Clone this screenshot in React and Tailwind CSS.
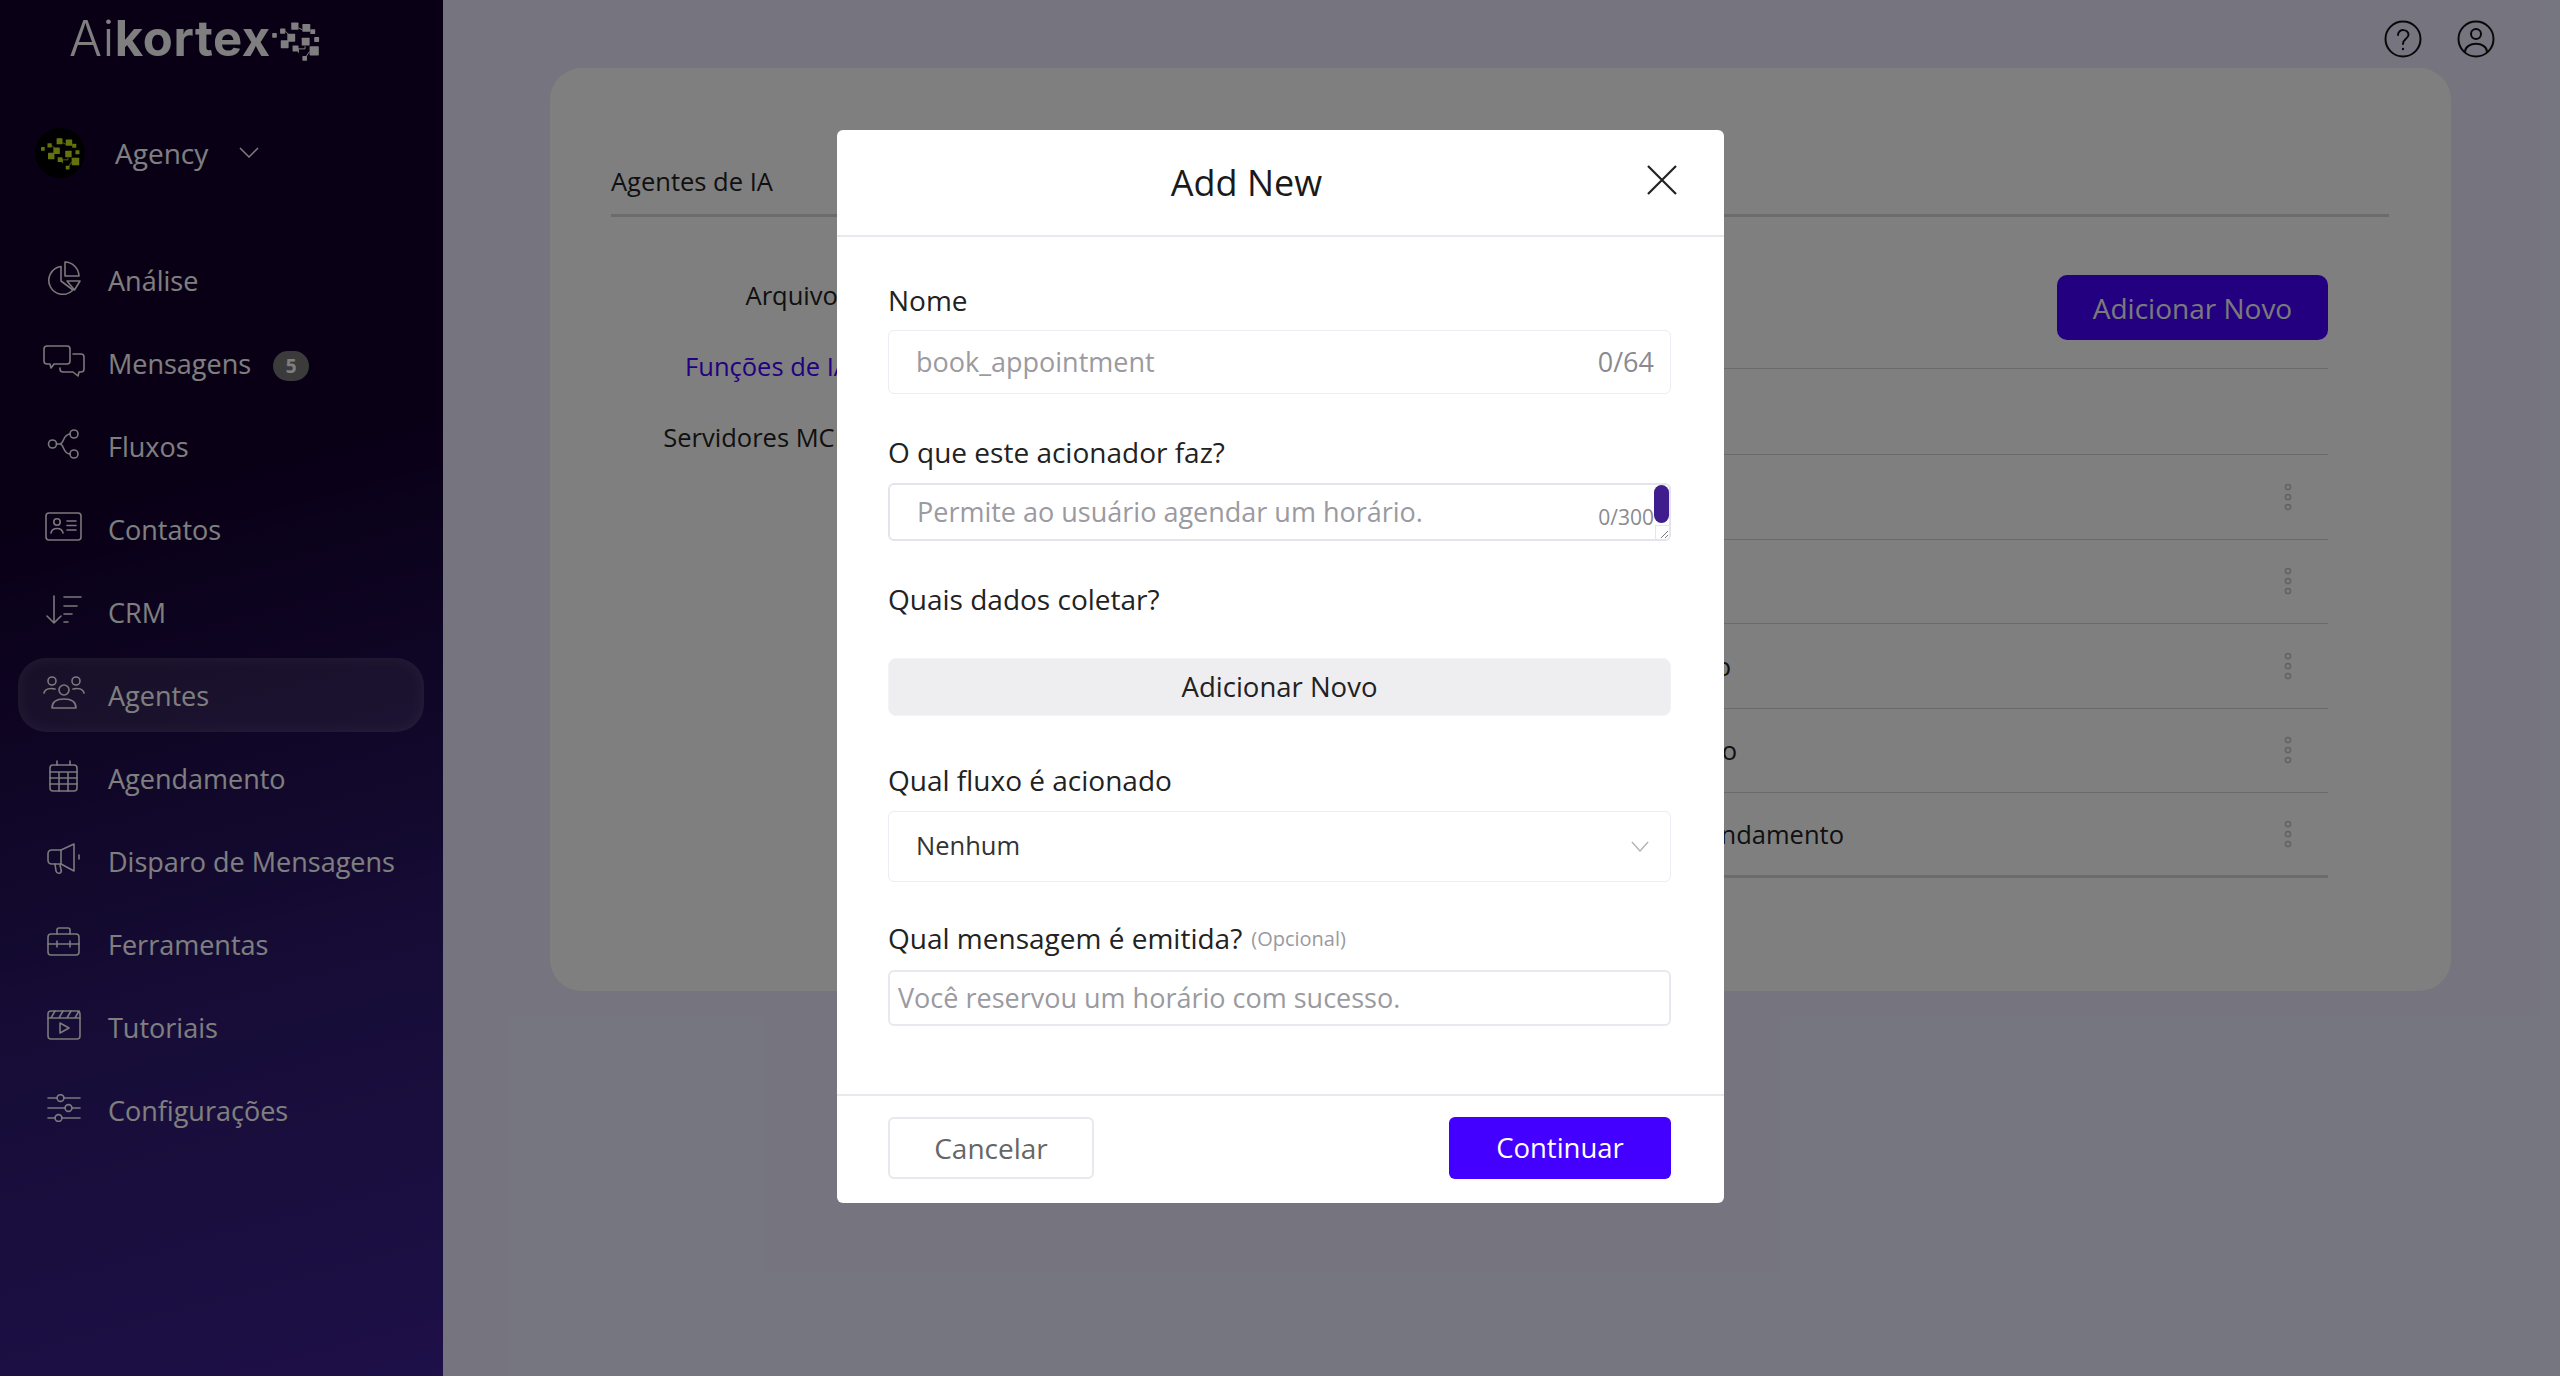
import React from "react";

const font = { fontFamily: '"Open Sans", sans-serif' };

function Brain({ className, fill }) {
  const squares = [
    [0, 40, 14, 14], [24, 26, 16, 16], [58, 8, 22, 22], [92, 12, 24, 24], [116, 28, 15, 15],
    [128, 52, 15, 15], [114, 80, 28, 28], [90, 54, 24, 24], [46, 42, 24, 24], [26, 62, 24, 24],
    [62, 78, 18, 18], [92, 110, 14, 14],
  ];
  return (
    <svg viewBox="0 0 145 125" className={className} fill={fill} stroke={fill} strokeWidth="3">
      {squares.map(([x, y, w, h], i) => (
        <rect key={i} x={x} y={y} width={w} height={h} rx="2" stroke="none" />
      ))}
      <path d="M70 88H100V80M114 96L100 116M80 88V100M40 34L50 44M92 30L80 24" fill="none" />
    </svg>
  );
}

const S = ({ w, h, children }) => (
  <svg viewBox={`0 0 ${w} ${h}`} width={w} height={h} fill="none" stroke="currentColor" strokeWidth="1.6" strokeLinecap="round" strokeLinejoin="round">
    {children}
  </svg>
);

const icons = {
  analise: (
    <S w={36} h={34}>
      <path d="M15 5.5A14 14 0 1 0 27 29L15 20Z" />
      <path d="M19 1A14.5 14.5 0 0 1 33 15H19Z" />
      <path d="M21 20H34L28.5 29Z" />
    </S>
  ),
  msg: (
    <S w={42} h={33}>
      <path d="M4 1H24Q27 1 27 4V16Q27 19 24 19H11L8 23L7 19H4Q1 19 1 16V4Q1 1 4 1Z" />
      <path d="M30 9H38Q41 9 41 12V24Q41 27 38 27H36L35 31L30 27H20Q17 27 17 24V23" />
    </S>
  ),
  fluxos: (
    <S w={34} h={30}>
      <circle cx="5.5" cy="15" r="4" />
      <circle cx="27" cy="5" r="4" />
      <circle cx="27" cy="25" r="4" />
      <path d="M9.5 15H13C17 15 16 5 23 5M13 15C17 15 16 25 23 25" />
    </S>
  ),
  contatos: (
    <S w={38} h={30}>
      <rect x="1" y="1" width="35" height="27" rx="3" />
      <circle cx="12" cy="10" r="3.2" />
      <path d="M6 21C7 15 17 15 18 21" />
      <path d="M22 9H31M22 13.5H31M22 18H31" />
    </S>
  ),
  crm: (
    <S w={37} h={30}>
      <path d="M8 1V28M1 21L8 28L15 21" />
      <path d="M18 2H35M18 11H31M18 19H26M18 27H22" />
    </S>
  ),
  agentes: (
    <S w={42} h={34}>
      <circle cx="9" cy="5" r="4" />
      <circle cx="33" cy="5" r="4" />
      <circle cx="21" cy="14" r="5" />
      <path d="M1 17C2 13 7 12 12 13M41 17C40 13 35 12 30 13" />
      <path d="M9 32C9 25 14 23 21 23C28 23 33 25 33 32Z" />
    </S>
  ),
  agenda: (
    <S w={30} h={33}>
      <rect x="1" y="5" width="27" height="26" rx="3" />
      <path d="M8 1V5M21 1V5M1 12H28M1 18H28M1 24H28M10 12V31M19 12V31" />
    </S>
  ),
  disparo: (
    <S w={34} h={33}>
      <path d="M27 1V28L14 21H5Q1 21 1 17V11Q1 7 5 7H14Z" />
      <path d="M14 7V21M8 21L9 28Q10 31 13 30Q15 29 14 26L13 22" />
      <path d="M32 12V16" />
    </S>
  ),
  ferramentas: (
    <S w={34} h={30}>
      <rect x="1" y="7" width="31" height="21" rx="3" />
      <path d="M10 7V3Q10 1 12 1H21Q23 1 23 3V7M1 17H32M10 14V20M23 14V20" />
    </S>
  ),
  tutoriais: (
    <S w={34} h={30}>
      <rect x="1" y="1" width="32" height="28" rx="3" />
      <path d="M1 8H33M4 8L8 1M12 8L16 1M20 8L24 1M28 8L32 1" />
      <path d="M13 13L22 18L13 23Z" />
    </S>
  ),
  config: (
    <S w={34} h={28}>
      <path d="M1 4H10M17 4H33M1 14H18M25 14H33M1 24H8M15 24H33" />
      <circle cx="13.5" cy="4" r="3.4" />
      <circle cx="21.5" cy="14" r="3.4" />
      <circle cx="11.5" cy="24" r="3.4" />
    </S>
  ),
};

const nav = [
  ["analise", "Análise"],
  ["msg", "Mensagens", "5"],
  ["fluxos", "Fluxos"],
  ["contatos", "Contatos"],
  ["crm", "CRM"],
  ["agentes", "Agentes", null, true],
  ["agenda", "Agendamento"],
  ["disparo", "Disparo de Mensagens"],
  ["ferramentas", "Ferramentas"],
  ["tutoriais", "Tutoriais"],
  ["config", "Configurações"],
];

function Sidebar() {
  return (
    <aside className="w-[443px] shrink-0 h-full text-white bg-[linear-gradient(165deg,#12002c_35%,#2e1a70_72%,#3c2090_100%)]">
      <div className="flex items-center pl-[69px] pt-[2px] h-[74px]">
        <span className="text-[49px] leading-none tracking-[0.6px] text-white" style={{ fontFamily: '"Inter", sans-serif' }}>
          <span className="font-light">Ai</span>
          <span className="font-bold">kortex</span>
        </span>
        <Brain className="w-[48px] h-[41px] ml-[1px] mt-[5px]" fill="#ffffff" />
      </div>
      <div className="flex items-center pl-[35px] mt-[54px] h-[50px]">
        <div className="w-[50px] h-[50px] rounded-full bg-black flex items-center justify-center">
          <Brain className="w-[39px] h-[34px]" fill="#c8e61c" />
        </div>
        <span className="ml-[30px] text-[28px] text-white">Agency</span>
        <svg viewBox="0 0 20 12" className="w-[20px] h-[12px] ml-[31px]" fill="none" stroke="#ffffff" strokeWidth="1.5">
          <path d="M1 1L10 10L19 1" />
        </svg>
      </div>
      <nav className="mt-[65px] flex flex-col gap-[9px] pl-[18px] pr-[19px]">
        {nav.map(([k, label, badge, active]) => (
          <div
            key={k}
            className={
              "flex items-center h-[74px] rounded-[28px] " +
              (active ? "bg-white/10 shadow-[inset_0_0_14px_rgba(255,255,255,0.12)]" : "")
            }
          >
            <div className="w-[90px] pl-[2px] flex justify-center shrink-0 -mt-[4px] text-white/95">{icons[k]}</div>
            <span className="text-[27px] text-white mt-[2px]">{label}</span>
            {badge && (
              <span className="ml-[22px] mt-[6px] w-[36px] h-[30px] rounded-full bg-[#777] flex items-center justify-center text-[19px] font-bold text-white">
                {badge}
              </span>
            )}
          </div>
        ))}
      </nav>
    </aside>
  );
}

function Dots() {
  return (
    <svg viewBox="0 0 8 28" width="8" height="28" fill="none" stroke="#c4c4cc" strokeWidth="1.5">
      <circle cx="4" cy="4" r="2.6" />
      <circle cx="4" cy="14" r="2.6" />
      <circle cx="4" cy="24" r="2.6" />
    </svg>
  );
}

const rows = [
  [null, "w-[400px]"],
  [null, "w-[400px]"],
  ["Marcar horário", "w-[580px]"],
  ["Cancelar horário", "w-[586px]"],
  ["Verificar Agendamento", "w-[693px]"],
];

function Main() {
  return (
    <main className="flex-1 h-full bg-[#ecebff] flex flex-col min-w-0">
      <div className="h-[68px] flex items-center justify-end pt-[10px] pr-[65px] gap-[35px] text-[#111]">
        <svg viewBox="0 0 38 38" width="38" height="38" fill="none" stroke="currentColor" strokeWidth="2">
          <circle cx="19" cy="19" r="17.5" />
          <path d="M14 15C14 8 25 9 24.5 15C24 19 19 19 19 24" strokeLinecap="round" />
          <circle cx="19" cy="29" r="1.2" fill="currentColor" stroke="none" />
        </svg>
        <svg viewBox="0 0 38 38" width="38" height="38" fill="none" stroke="currentColor" strokeWidth="2">
          <circle cx="19" cy="19" r="17.5" />
          <circle cx="19" cy="14" r="5" />
          <path d="M8 32C8 21 30 21 30 32" />
        </svg>
      </div>
      <div className="ml-[107px] mr-[109px] h-[923px] bg-white rounded-[32px] pt-[90px] pl-[61px] pr-[62px] text-[25.5px] text-[#222]">
        <div className="h-[63px] border-b-[3px] border-[#d9d9dc] leading-[54px] -mt-[4px]">Agentes de IA</div>
        <div className="flex">
          <div className="w-[239px] shrink-0 pt-[60px] flex flex-col items-end gap-[35px] leading-[36px]">
            <span>Arquivos</span>
            <span className="text-[#4400ff]">Funções de IA</span>
            <span>Servidores MCP</span>
          </div>
          <div className="flex-1 pr-[61px] ml-[301px] min-w-0">
            <div className="flex justify-end h-[65px] mt-[58px]">
              <div className="w-[271px] rounded-[10px] bg-[#4400ff] text-[#f4f4f4] text-[28px] flex items-center justify-center">
                Adicionar Novo
              </div>
            </div>
            <div className="h-[29px] border-b border-[#d4d4d8]" />
            <div className="h-[86px] border-b border-[#d4d4d8]" />
            {rows.map(([t, w], i) => (
              <div
                key={i}
                className={
                  "h-[84.5px] flex items-center justify-between pr-[36px] " +
                  (i === 4 ? "border-b-[3px] border-[#d9d9dc]" : "border-b border-[#d4d4d8]")
                }
              >
                <span className={w + " text-right whitespace-nowrap"}>{t}</span>
                <Dots />
              </div>
            ))}
          </div>
        </div>
      </div>
    </main>
  );
}

const labelCls = "text-[28px] leading-[38px] text-[#222] font-medium";
const phCls = "text-[#9a9aa0]";

function Modal() {
  return (
    <div className="absolute left-[837px] top-[130px] w-[887px] h-[1073px] bg-white rounded-[6px] flex flex-col">
      <div className="relative h-[107px] border-b-2 border-[#e8e8ee] flex items-center justify-center pr-[68px]">
        <span className="text-[36px] font-medium text-[#1a1a1a]">Add New</span>
        <svg viewBox="0 0 30 30" width="30" height="30" className="absolute right-[47px] top-[35px]" fill="none" stroke="#222" strokeWidth="2.2">
          <path d="M1 1L29 29M29 1L1 29" />
        </svg>
      </div>
      <div className="flex-1 pl-[51px] pr-[53px]">
        <div className={labelCls + " mt-[44px]"}>Nome</div>
        <div className="mt-[11px] h-[64px] rounded-[6px] border border-[#ececf2] flex items-center justify-between pl-[27px] pr-[16px] text-[27px]">
          <span className={phCls}>book_appointment</span>
          <span className="text-[#8a8a90]">0/64</span>
        </div>
        <div className={labelCls + " mt-[39px]"}>O que este acionador faz?</div>
        <div className="relative mt-[12px] h-[58px] rounded-[6px] border-2 border-[#e4e4ee] flex items-center pl-[27px] text-[27px] overflow-hidden">
          <span className={phCls}>Permite ao usuário agendar um horário.</span>
          <span className="absolute right-[15px] top-[17px] text-[21px] text-[#8a8a90]">0/300</span>
          <span className="absolute right-0 top-0 w-[15px] h-[38px] rounded-full bg-[#3f1d8c]" />
          <span className="absolute right-0 bottom-0 w-[14px] h-[14px] border-l border-t border-[#e4e4ee] bg-white flex items-end justify-end">
            <svg viewBox="0 0 10 10" width="10" height="10" fill="none" stroke="#777" strokeWidth="1">
              <path d="M2 9L9 2M6 9L9 6" />
            </svg>
          </span>
        </div>
        <div className={labelCls + " mt-[39px]"}>Quais dados coletar?</div>
        <div className="mt-[40px] h-[58px] rounded-[8px] bg-[#eeedf0] flex items-center justify-center text-[27.5px] text-[#222] border border-[#f3f3f6]">
          Adicionar Novo
        </div>
        <div className={labelCls + " mt-[45px]"}>Qual fluxo é acionado</div>
        <div className="mt-[12px] h-[71px] rounded-[6px] border border-[#ececf2] flex items-center justify-between pl-[27px] pr-[21px] text-[25.5px] text-[#333]">
          <span className="-mt-[2px]">Nenhum</span>
          <svg viewBox="0 0 20 12" className="w-[18px] h-[11px]" fill="none" stroke="#b0b0b6" strokeWidth="1.5">
            <path d="M1 1L10 11L19 1" />
          </svg>
        </div>
        <div className="mt-[37px] flex items-baseline gap-[9px]">
          <span className={labelCls}>Qual mensagem é emitida?</span>
          <span className="text-[20px] text-[#9a9aa0] -translate-y-[3px]">(Opcional)</span>
        </div>
        <div className="mt-[13px] h-[56px] rounded-[6px] border-2 border-[#e8e8ee] flex items-center pl-[8px] text-[27px]">
          <span className={phCls}>Você reservou um horário com sucesso.</span>
        </div>
      </div>
      <div className="h-[109px] border-t-2 border-[#e8e8ee] pl-[51px] pr-[53px] flex items-center justify-between pb-[3px]">
        <div className="w-[206px] h-[62px] rounded-[6px] border-2 border-[#e8e8ee] flex items-center justify-center text-[28px] text-[#666]">
          Cancelar
        </div>
        <div className="w-[222px] h-[62px] rounded-[6px] bg-[#4400ff] flex items-center justify-center text-[27.5px] text-white">
          Continuar
        </div>
      </div>
    </div>
  );
}

export default function App() {
  return (
    <div className="relative w-[2560px] h-[1376px] overflow-hidden flex" style={font}>
      <Sidebar />
      <Main />
      <div className="absolute inset-0 bg-black/50" />
      <Modal />
    </div>
  );
}
